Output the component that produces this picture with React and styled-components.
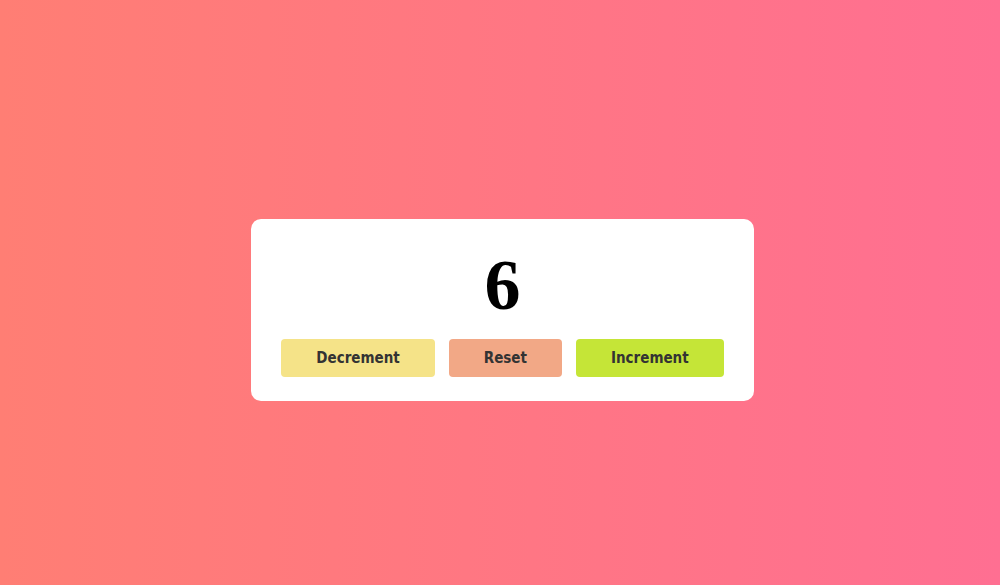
import { useState } from "react";
import styled, { createGlobalStyle } from "styled-components";

const GlobalStyle = createGlobalStyle`
  * {
    box-sizing: border-box;
  }
  body {
    margin: 0;
    font-family: "DejaVu Sans", sans-serif;
  }
`;

const Page = styled.div`
  min-height: 100vh;
  display: flex;
  align-items: center;
  justify-content: center;
  padding: 35px 0 0 5px;
  background: linear-gradient(to right, #ff7e74, #ff6f92);
`;

const Card = styled.div`
  display: flex;
  flex-direction: column;
  align-items: center;
  background: #fff;
  border-radius: 10px;
  padding: 24px 30px;
`;

const Count = styled.h1`
  margin: 0 0 12px;
  font-family: "Liberation Serif", serif;
  font-size: 72px;
  font-weight: 700;
  line-height: 84px;
  color: #000;
`;

const Buttons = styled.div`
  display: flex;
  gap: 14px;
`;

const Button = styled.button`
  height: 38px;
  padding: 0 35px;
  border: none;
  border-radius: 4px;
  background: ${(p) => p.$bg};
  color: #333;
  font-family: "DejaVu Sans Condensed", "DejaVu Sans", sans-serif;
  font-size: 15px;
  font-weight: 700;
  cursor: pointer;
`;

export default function App() {
  const [count, setCount] = useState(6);
  return (
    <>
      <GlobalStyle />
      <Page>
        <Card>
          <Count>{count}</Count>
          <Buttons>
            <Button $bg="#f5e388" onClick={() => setCount(count - 1)}>
              Decrement
            </Button>
            <Button $bg="#f2a886" onClick={() => setCount(0)}>
              Reset
            </Button>
            <Button $bg="#c5e537" onClick={() => setCount(count + 1)}>
              Increment
            </Button>
          </Buttons>
        </Card>
      </Page>
    </>
  );
}
